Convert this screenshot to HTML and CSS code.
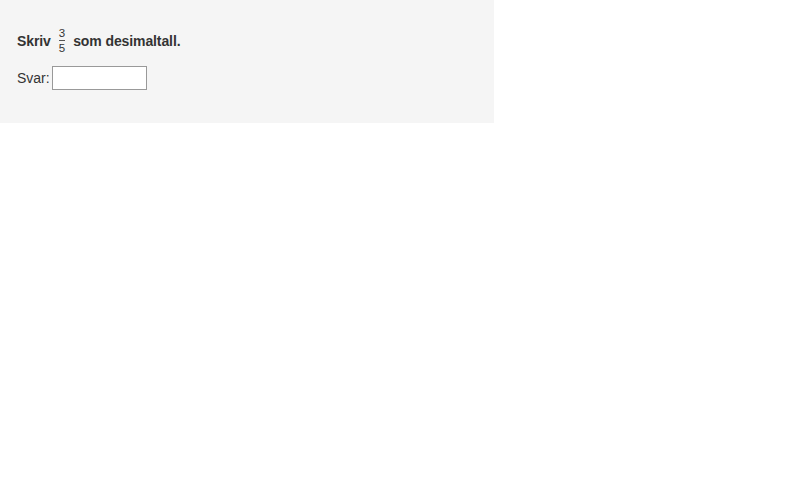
FILE: index.html
```html
<!DOCTYPE html>
<html lang="no">
  <head>
    <meta charset="UTF-8" />
    <meta name="viewport" content="width=device-width, initial-scale=1.0" />
    <title>Desimaltall</title>
    <link rel="stylesheet" href="styles.css">
  </head>
  <body>
    <main class="task">
      <p class="question">
        Skriv
        <span class="frac"><span class="num">3</span><span class="den">5</span></span>
        som desimaltall.
      </p>
      <div class="answer">
        <label for="svar">Svar:</label><input type="text" id="svar" name="svar" autocomplete="off" />
      </div>
    </main>
  </body>
</html>
```

FILE: styles.css
```css
html {
  font-size: 14px;
  font-family: 'Liberation Sans', Arial, sans-serif;
}
body {
  margin: 0;
  color: #333;
}
.task {
  width: 494px;
  height: 123px;
  box-sizing: border-box;
  padding: 27px 17px 0;
  background-color: #f5f5f5;
}
.question {
  margin: 0;
  font-weight: bold;
  letter-spacing: -0.1px;
  display: flex;
  align-items: center;
  gap: 8px;
}
.frac {
  display: inline-flex;
  flex-direction: column;
  align-items: center;
  font-size: 11.5px;
  font-weight: normal;
  line-height: 12px;
  letter-spacing: 0;
}
.frac .num {
  border-bottom: 1px solid #555;
  padding: 0 0 1px;
}
.frac .den {
  padding-top: 1px;
}
.answer {
  display: flex;
  align-items: center;
  margin-top: 12px;
}
.answer label {
  padding-right: 2px;
}
.answer input {
  width: 95px;
  height: 24px;
  box-sizing: border-box;
  margin: 0;
  border: 1px solid #999;
  background: #fff;
  font-size: 14px;
  padding: 0 4px;
}
```
